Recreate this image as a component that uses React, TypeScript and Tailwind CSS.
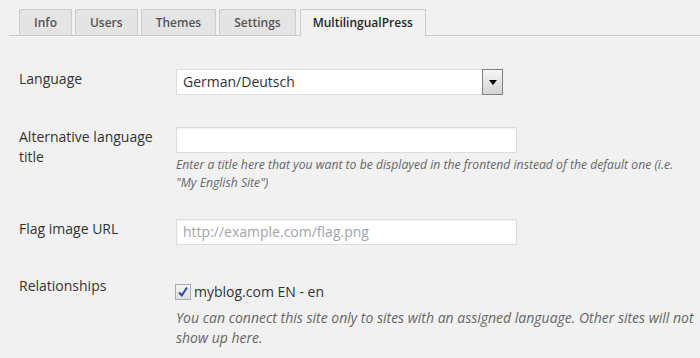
export default function App() {
  const tabs = ["Info", "Users", "Themes", "Settings"];

  return (
    <div className="min-h-screen w-full bg-[#f1f1f1] font-['Open_Sans',sans-serif] text-[14px] text-[#333]">
      {/* Tabs */}
      <div className="ml-[9px] flex items-end gap-[3px] border-b border-[#ccc] pl-[10px] pt-[9px]">
        {tabs.map((t) => (
          <div
            key={t}
            className="h-[26px] border border-b-0 border-[#ccc] bg-[#e4e4e4] px-[14px] text-[12px] font-semibold leading-[25px] text-[#555]"
          >
            {t}
          </div>
        ))}
        <div className="-mb-px ml-px h-[27px] border border-b-0 border-[#ccc] bg-[#f1f1f1] px-[12px] text-[12px] font-semibold leading-[25px] text-[#23282d]">
          MultilingualPress
        </div>
      </div>

      <div className="pl-[19px]">
        {/* Language */}
        <div className="mt-[33px] flex">
          <div className="w-[157px] shrink-0 leading-[20px]">Language</div>
          <div className="flex h-[26px] w-[327px] items-center justify-between border border-[#ddd] bg-white pl-[6px]">
            <span className="leading-[20px]">German/Deutsch</span>
            <div className="-mr-px flex h-[26px] w-[21px] items-center justify-center border border-[#7e7e7e] bg-gradient-to-b from-[#f6f6f6] to-[#d4d4d4]">
              <div className="h-0 w-0 border-x-[4px] border-t-[5px] border-x-transparent border-t-black" />
            </div>
          </div>
        </div>

        {/* Alternative language title */}
        <div className="mt-[32px] flex">
          <div className="w-[157px] shrink-0 pr-[10px] leading-[20px]">
            Alternative language title
          </div>
          <div className="w-[519px]">
            <div className="h-[26px] w-[341px] border border-[#ddd] bg-white shadow-[inset_0_1px_2px_rgba(0,0,0,0.07)]" />
            <p className="mt-[3px] max-w-[506px] text-[12.2px] italic leading-[18px] text-[#666]">
              Enter a title here that you want to be displayed in the frontend
              instead of the default one (i.e. "My English Site")
            </p>
          </div>
        </div>

        {/* Flag image URL */}
        <div className="mt-[27px] flex">
          <div className="w-[157px] shrink-0 leading-[20px]">Flag image URL</div>
          <div className="flex h-[26px] w-[341px] items-center border border-[#ddd] bg-white pl-[6px] shadow-[inset_0_1px_2px_rgba(0,0,0,0.07)]">
            <span className="leading-[20px] text-[#a0a5aa]">
              http://example.com/flag.png
            </span>
          </div>
        </div>

        {/* Relationships */}
        <div className="mt-[31px] flex">
          <div className="w-[157px] shrink-0 leading-[20px]">Relationships</div>
          <div className="w-[519px] pt-[6px]">
            <div className="flex items-center leading-[20px]">
              <div className="-ml-px mr-[3px] flex h-[16px] w-[16px] items-center justify-center border border-[#a8adb2] bg-gradient-to-b from-[#f4f4f4] to-[#e0e0e0]">
                <svg width="12" height="12" viewBox="0 0 12 12">
                  <path
                    d="M2 6.5 L4.8 9.5 L10 1.5"
                    fill="none"
                    stroke="#2c47a3"
                    strokeWidth="2"
                  />
                </svg>
              </div>
              <span>myblog.com EN - en</span>
            </div>
            <p className="mt-[6px] italic leading-[20px] text-[#666]">
              You can connect this site only to sites with an assigned language.
              Other sites will not show up here.
            </p>
          </div>
        </div>
      </div>
    </div>
  );
}
